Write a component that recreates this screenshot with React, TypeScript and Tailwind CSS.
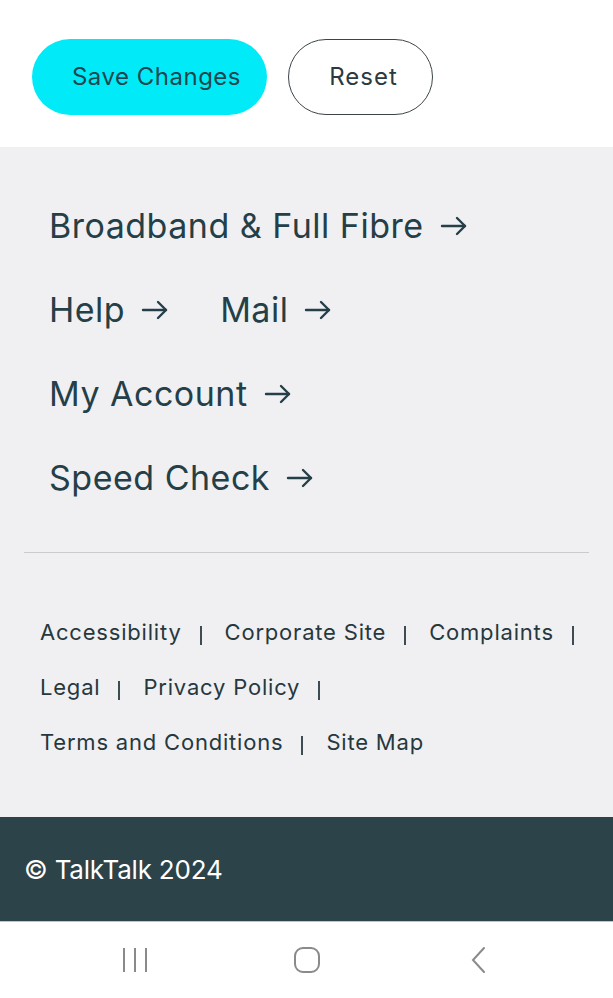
import React from 'react';

const mainLinks: string[][] = [['Broadband & Full Fibre'], ['Help', 'Mail'], ['My Account'], ['Speed Check']];

const footerRows: string[][] = [
  ['Accessibility', 'Corporate Site', 'Complaints'],
  ['Legal', 'Privacy Policy'],
  ['Terms and Conditions', 'Site Map'],
];

function Arrow() {
  return (
    <svg width="27" height="20" viewBox="0 0 27 20" fill="none" stroke="currentColor" strokeWidth="2.4" strokeLinecap="round" strokeLinejoin="round" className="ml-[16px]">
      <path d="M2 10h23" />
      <path d="M17 2l8 8-8 8" />
    </svg>
  );
}

export default function App() {
  return (
    <div className="w-[613px] h-[998px] bg-white flex flex-col font-['Inter',sans-serif] text-[#243f47]">
      {/* Form actions */}
      <div className="h-[147px] flex items-start gap-[21px] px-[32px] pt-[39px]">
        <button className="h-[76px] w-[235px] rounded-full bg-[#00ebf7] text-[24px] tracking-[0.5px] text-[#1e4650] pl-[14px]">
          Save Changes
        </button>
        <button className="h-[76px] w-[145px] rounded-full border border-[#3b4448] bg-white text-[24px] tracking-[1px] text-[#2b3a3f] pl-[6px]">
          Reset
        </button>
      </div>

      {/* Footer nav */}
      <div className="h-[670px] bg-[#f0f0f3] flex flex-col">
        <div className="flex flex-col pl-[49px] pt-[58px] gap-[43px]">
          {mainLinks.map((row, i) => (
            <div key={i} className="flex items-center gap-[52px] h-[41px]">
              {row.map(label => (
                <a key={label} className="flex items-center text-[34px] tracking-[0.5px]">
                  {label}
                  <Arrow />
                </a>
              ))}
            </div>
          ))}
        </div>

        <div className="mx-[24px] mt-[54px] border-t border-[#cbcbcd]" />

        <div className="flex flex-col pl-[40px] pt-[67px] gap-[31px] text-[22px] tracking-[0.8px] text-[#27383d]">
          {footerRows.map((row, i) => (
            <div key={i} className="flex items-center h-[24px]">
              {row.map((label, j) => (
                <React.Fragment key={label}>
                  <a>{label}</a>
                  {(i < 2 || j < row.length - 1) && (
                    <span className="ml-[18px] mr-[23px] w-[2px] h-[19px] bg-[#3d4c52] translate-y-[3px]" />
                  )}
                </React.Fragment>
              ))}
            </div>
          ))}
        </div>
      </div>

      {/* Copyright */}
      <div className="h-[104px] bg-[#2c434a] flex items-center px-[24px] text-white text-[26px] tracking-[-0.2px]">
        © TalkTalk 2024
      </div>

      {/* Android navigation bar */}
      <div className="flex-1 bg-white flex items-center pl-[121px] gap-[144px] border-t border-[#b9c6cc]">
        <svg width="28" height="26" viewBox="0 0 28 26" stroke="#8a8a8a" strokeWidth="2">
          <path d="M3 1v24M14 1v24M25 1v24" />
        </svg>
        <svg width="28" height="26" viewBox="0 0 28 26" fill="none" stroke="#8a8a8a" strokeWidth="2">
          <rect x="2" y="1" width="24" height="24" rx="8" />
        </svg>
        <svg width="28" height="28" viewBox="0 0 28 28" fill="none" stroke="#8a8a8a" strokeWidth="2" strokeLinecap="round">
          <path d="M19 2L8 14l11 12" />
        </svg>
      </div>
    </div>
  );
}
